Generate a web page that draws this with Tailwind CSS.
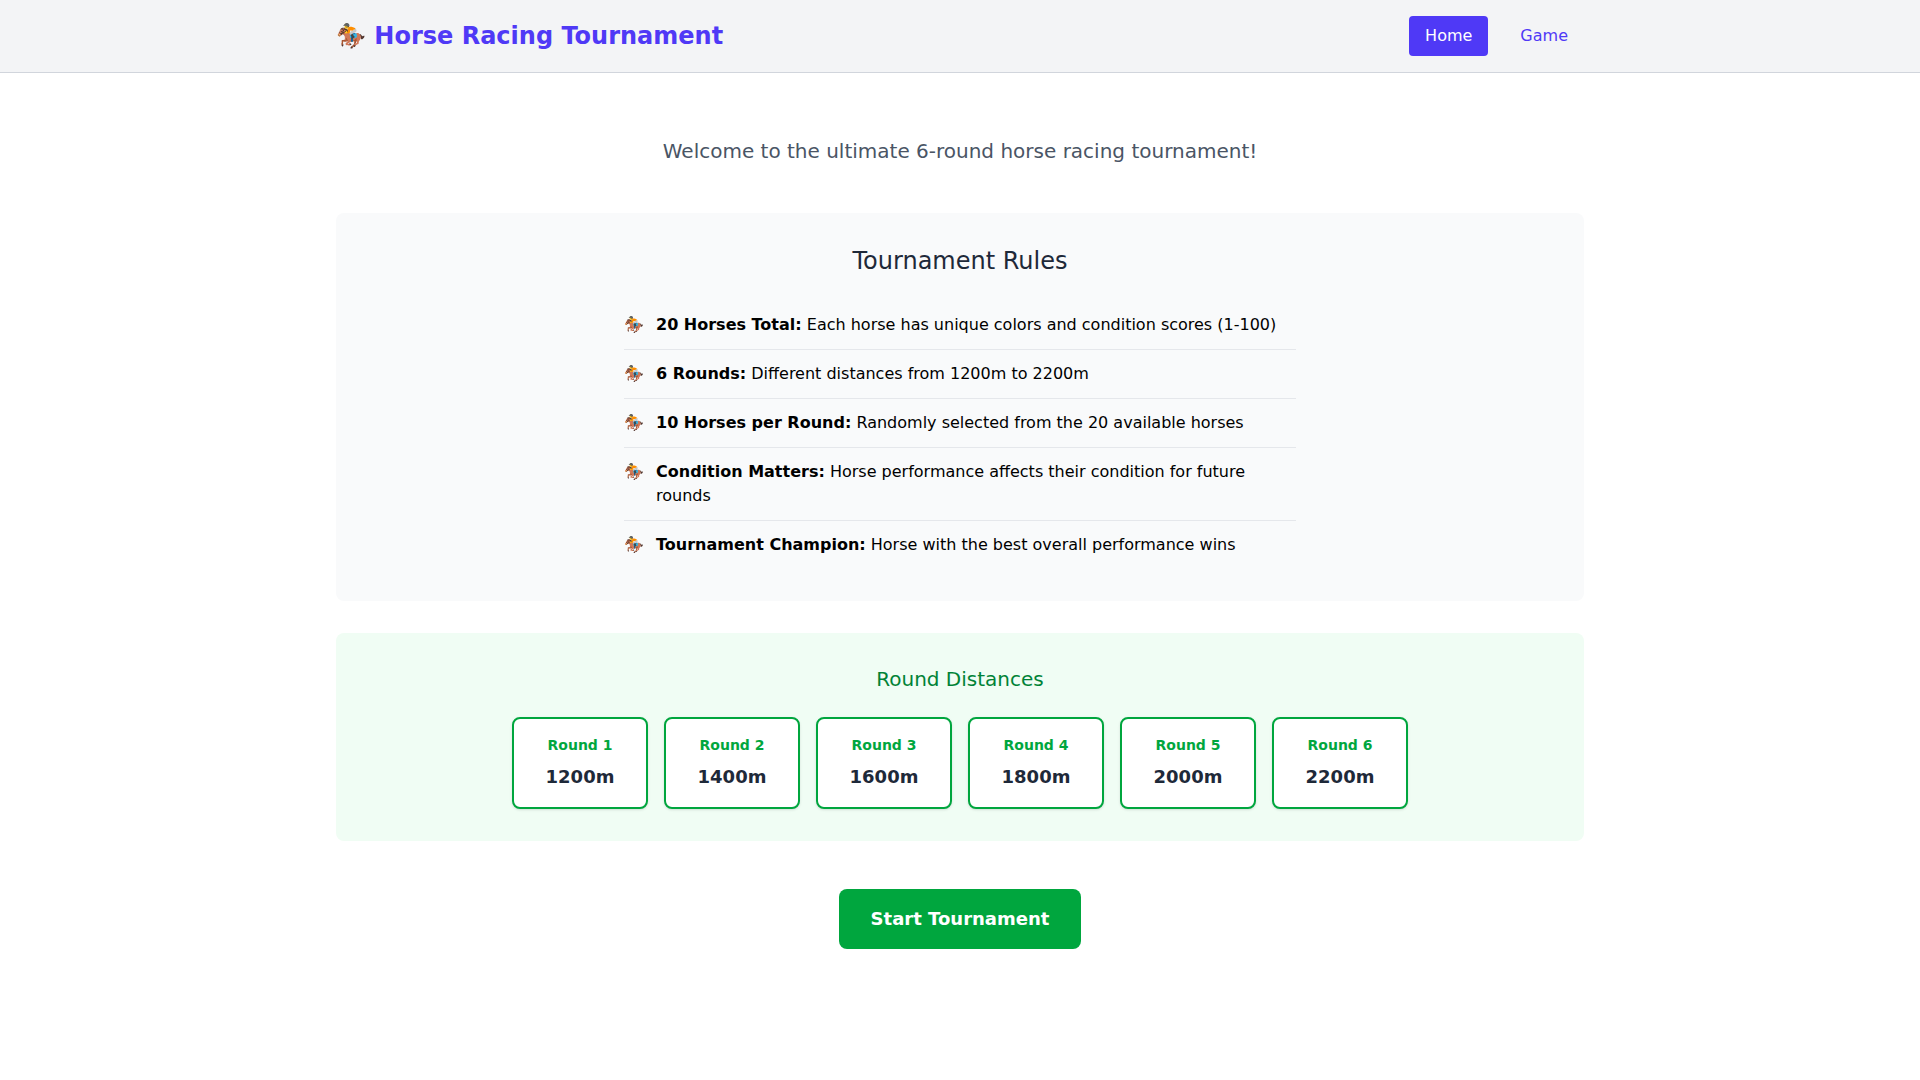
<!DOCTYPE html>
<html lang="en">
<head>
<meta charset="utf-8">
<title>Horse Racing Tournament</title>
<script src="https://cdn.jsdelivr.net/npm/@tailwindcss/browser@4"></script>
</head>
<body class="min-h-screen bg-white font-['DejaVu_Sans',sans-serif] text-black">
<header class="border-b border-gray-300 bg-gray-100 py-4">
  <div class="mx-auto flex max-w-7xl items-center justify-between px-4">
    <h1 class="text-2xl font-bold text-indigo-600">🏇 Horse Racing Tournament</h1>
    <nav class="flex gap-4">
      <a href="#home" class="rounded bg-indigo-600 px-4 py-2 text-white">Home</a>
      <a href="#game" class="rounded px-4 py-2 text-indigo-600">Game</a>
    </nav>
  </div>
</header>
<main class="mx-auto max-w-7xl px-4 py-16 text-center">
  <p class="mb-12 text-xl text-gray-600">Welcome to the ultimate 6-round horse racing tournament!</p>
  <section class="mb-8 rounded-lg bg-gray-50 p-8">
    <h2 class="mb-6 text-2xl text-gray-800">Tournament Rules</h2>
    <ul class="mx-auto max-w-2xl divide-y divide-gray-200 text-left">
      <li class="flex gap-3 py-3"><span>🏇</span><span><strong>20 Horses Total:</strong> Each horse has unique colors and condition scores (1-100)</span></li>
      <li class="flex gap-3 py-3"><span>🏇</span><span><strong>6 Rounds:</strong> Different distances from 1200m to 2200m</span></li>
      <li class="flex gap-3 py-3"><span>🏇</span><span><strong>10 Horses per Round:</strong> Randomly selected from the 20 available horses</span></li>
      <li class="flex gap-3 py-3"><span>🏇</span><span><strong>Condition Matters:</strong> Horse performance affects their condition for future rounds</span></li>
      <li class="flex gap-3 py-3"><span>🏇</span><span><strong>Tournament Champion:</strong> Horse with the best overall performance wins</span></li>
    </ul>
  </section>
  <section class="mb-12 rounded-lg bg-green-50 p-8">
    <h2 class="mb-6 text-xl text-green-700">Round Distances</h2>
    <div class="mx-auto grid max-w-4xl grid-cols-6 gap-4">
      <div class="rounded-lg border-2 border-green-600 bg-white p-4 shadow-sm"><div class="mb-2 text-sm font-bold text-green-600">Round 1</div><div class="text-lg font-bold text-gray-800">1200m</div></div>
      <div class="rounded-lg border-2 border-green-600 bg-white p-4 shadow-sm"><div class="mb-2 text-sm font-bold text-green-600">Round 2</div><div class="text-lg font-bold text-gray-800">1400m</div></div>
      <div class="rounded-lg border-2 border-green-600 bg-white p-4 shadow-sm"><div class="mb-2 text-sm font-bold text-green-600">Round 3</div><div class="text-lg font-bold text-gray-800">1600m</div></div>
      <div class="rounded-lg border-2 border-green-600 bg-white p-4 shadow-sm"><div class="mb-2 text-sm font-bold text-green-600">Round 4</div><div class="text-lg font-bold text-gray-800">1800m</div></div>
      <div class="rounded-lg border-2 border-green-600 bg-white p-4 shadow-sm"><div class="mb-2 text-sm font-bold text-green-600">Round 5</div><div class="text-lg font-bold text-gray-800">2000m</div></div>
      <div class="rounded-lg border-2 border-green-600 bg-white p-4 shadow-sm"><div class="mb-2 text-sm font-bold text-green-600">Round 6</div><div class="text-lg font-bold text-gray-800">2200m</div></div>
    </div>
  </section>
  <button type="button" class="rounded-lg bg-green-600 px-8 py-4 text-lg font-bold text-white">Start Tournament</button>
</main>
</body>
</html>
